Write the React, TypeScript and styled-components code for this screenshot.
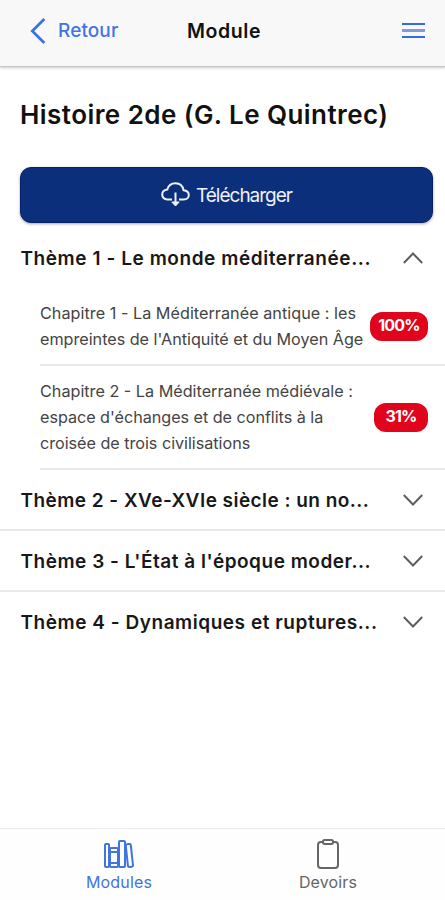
import React from "react";
import styled, { createGlobalStyle } from "styled-components";
import { IoLibraryOutline, IoClipboardOutline } from "react-icons/io5";

const GlobalStyle = createGlobalStyle`
  *, *::before, *::after { box-sizing: border-box; }
  body {
    margin: 0;
    background: #fff;
    font-family: Inter, "Liberation Sans", sans-serif;
    color: #111;
  }
  button {
    font: inherit;
    border: 0;
    padding: 0;
    background: none;
  }
  svg { display: block; flex: none; }
`;

const Screen = styled.div`
  display: flex;
  flex-direction: column;
  height: 900px;
  overflow: hidden;
`;

const Header = styled.header`
  display: grid;
  grid-template-columns: 157px 1fr auto;
  align-items: center;
  flex: none;
  height: 66px;
  padding: 0 20px 5px 30px;
  background: #f9f8f9;
  box-shadow: 0 1px 1px #c6c6c6, 0 2px 3px #cfcfcf;
`;

const BackButton = styled.button`
  display: flex;
  align-items: center;
  gap: 11px;
  color: #4274e4;
  font-size: 19px;
  font-weight: 500;
  letter-spacing: 0.1px;
`;

const HeaderTitle = styled.h1`
  margin: 0;
  font-size: 19.5px;
  line-height: 24px;
  font-weight: 600;
  letter-spacing: 0.6px;
`;

const MenuButton = styled.button`
  justify-self: end;
`;

const Content = styled.main`
  flex: 1;
`;

const CourseTitle = styled.h2`
  margin: 33px 0 0 20px;
  font-size: 26px;
  line-height: 32px;
  font-weight: 600;
  letter-spacing: 0.44px;
  white-space: nowrap;
`;

const DownloadButton = styled.button`
  display: flex;
  align-items: center;
  justify-content: center;
  gap: 6px;
  width: 413px;
  height: 56px;
  margin: 36px 0 0 20px;
  border-radius: 11px;
  border: 1px solid #0a1f6a;
  background: #0c2f7b;
  box-shadow: 0 1px 3px rgba(0, 0, 0, 0.35);
  color: #eef1fa;
  font-size: 19px;
  letter-spacing: -1px;
`;

const ThemeRow = styled.button<{ $open?: boolean; $last?: boolean }>`
  display: flex;
  align-items: center;
  justify-content: space-between;
  width: 100%;
  height: ${({ $open, $last }) => ($open ? 70 : $last ? 59 : 61)}px;
  padding: ${({ $open }) => ($open ? "0" : "1px")} 21px 0 20.5px;
  border-bottom: ${({ $open, $last }) => ($open || $last ? "0" : "2px solid #e9e9e9")};
  color: #181818;
  text-align: left;
`;

const ThemeTitle = styled.span<{ $spacing: number }>`
  font-size: 19px;
  line-height: 26px;
  padding-top: 1px;
  font-weight: 600;
  letter-spacing: ${({ $spacing }) => $spacing}px;
  white-space: nowrap;
`;

const ChapterList = styled.ul`
  list-style: none;
  margin: 0;
  padding: 0 0 0 40px;
`;

const Chapter = styled.li<{ $height: number; $lift: number }>`
  display: flex;
  align-items: center;
  justify-content: space-between;
  height: ${({ $height }) => $height}px;
  padding-right: 17px;
  padding-bottom: ${({ $lift }) => $lift}px;
  border-bottom: 2px solid #e9e9e9;
`;

const ChapterTitle = styled.span`
  flex: none;
  width: 328px;
  color: #444;
  font-size: 16.2px;
  line-height: 26px;
`;

const Line = styled.span<{ $spacing: number }>`
  display: block;
  white-space: nowrap;
  letter-spacing: ${({ $spacing }) => $spacing}px;
`;

const Score = styled.span<{ $wide?: boolean }>`
  flex: none;
  width: ${({ $wide }) => ($wide ? 58 : 54)}px;
  height: 29px;
  margin-left: -10px;
  border-radius: 12px;
  background: #e0041c;
  color: #fff;
  font-size: 16px;
  line-height: 27px;
  font-weight: 700;
  letter-spacing: -0.75px;
  text-align: center;
`;

const TabBar = styled.nav`
  display: grid;
  grid-template-columns: 209px 209px;
  justify-content: center;
  flex: none;
  height: 72px;
  padding-left: 2px;
  border-top: 1px solid #ececec;
  background: #fefefe;
`;

const Tab = styled.button<{ $active?: boolean }>`
  display: flex;
  flex-direction: column;
  align-items: center;
  justify-content: flex-start;
  gap: 1px;
  padding-top: 9px;
  color: ${({ $active }) => ($active ? "#4273df" : "#666")};
  font-size: 16px;
  line-height: 22px;
  letter-spacing: 0.15px;
`;

const Chevron = ({ up = false }: { up?: boolean }) => (
  <svg width="22" height="14" viewBox="0 0 22 14" fill="none" stroke="#5e5e5e" strokeWidth="2">
    <path d={up ? "M1.8 12 L11 2.5 L20.2 12" : "M1.8 2 L11 11.5 L20.2 2"} />
  </svg>
);

const BackIcon = () => (
  <svg width="17" height="28" viewBox="0 0 17 28" fill="none" stroke="#3a70e8" strokeWidth="2.7">
    <path d="M14.3 2 L2.3 14 L14.3 26" />
  </svg>
);

const MenuIcon = () => (
  <svg width="23" height="17" viewBox="0 0 23 17">
    <rect y="1" width="23" height="2" fill="#356be0" />
    <rect y="7" width="23" height="3" fill="#8299dc" />
    <rect y="14" width="23" height="2" fill="#356be0" />
  </svg>
);

const CloudDownloadIcon = () => (
  <svg width="29" height="26" viewBox="0 0 29 26" fill="none" stroke="currentColor" strokeWidth="2">
    <path d="M11 17.5 H6.2 C3.2 17.5 1.2 15.3 1.2 12.6 C1.2 9.8 3.3 8 6.3 7.6 C7.3 3.8 10.5 1.3 14.5 1.3 C18.8 1.3 21.8 4.2 22.5 8.2 C25.7 8.5 27.8 10.3 27.8 13 C27.8 15.7 25.7 17.5 22.8 17.5 H18" />
    <path d="M14.5 10.5 V22" />
    <path d="M10.8 20 L14.5 24 L18.2 20 Z" fill="currentColor" strokeWidth="1" strokeLinejoin="round" />
  </svg>
);

type ChapterData = {
  height: number;
  lift: number;
  score: string;
  lines: [string, number][];
};

const chapters: ChapterData[] = [
  {
    height: 73,
    lift: 5,
    score: "100%",
    lines: [
      ["Chapitre 1 - La Méditerranée antique : les", 0.03],
      ["empreintes de l'Antiquité et du Moyen Âge", -0.02],
    ],
  },
  {
    height: 104,
    lift: 0,
    score: "31%",
    lines: [
      ["Chapitre 2 - La Méditerranée médiévale :", 0],
      ["espace d'échanges et de conflits à la", -0.04],
      ["croisée de trois civilisations", -0.03],
    ],
  },
];

const closedThemes: [string, number][] = [
  ["Thème 2 - XVe-XVIe siècle : un no...", 0.46],
  ["Thème 3 - L'État à l'époque moder...", 0.52],
  ["Thème 4 - Dynamiques et ruptures...", 0.54],
];

export default function App() {
  return (
    <Screen>
      <GlobalStyle />
      <Header>
        <BackButton>
          <BackIcon />
          Retour
        </BackButton>
        <HeaderTitle>Module</HeaderTitle>
        <MenuButton aria-label="Menu">
          <MenuIcon />
        </MenuButton>
      </Header>
      <Content>
        <CourseTitle>Histoire 2de (G. Le Quintrec)</CourseTitle>
        <DownloadButton>
          <CloudDownloadIcon />
          Télécharger
        </DownloadButton>
        <ThemeRow $open>
          <ThemeTitle $spacing={0.57}>Thème 1 - Le monde méditerranée...</ThemeTitle>
          <Chevron up />
        </ThemeRow>
        <ChapterList>
          {chapters.map((chapter) => (
            <Chapter key={chapter.score} $height={chapter.height} $lift={chapter.lift}>
              <ChapterTitle>
                {chapter.lines.map(([text, spacing]) => (
                  <Line key={text} $spacing={spacing}>{text}</Line>
                ))}
              </ChapterTitle>
              <Score $wide={chapter.score.length > 3}>{chapter.score}</Score>
            </Chapter>
          ))}
        </ChapterList>
        {closedThemes.map(([title, spacing], index) => (
          <ThemeRow key={title} $last={index === closedThemes.length - 1}>
            <ThemeTitle $spacing={spacing}>{title}</ThemeTitle>
            <Chevron />
          </ThemeRow>
        ))}
      </Content>
      <TabBar>
        <Tab $active>
          <IoLibraryOutline size={32} />
          Modules
        </Tab>
        <Tab>
          <IoClipboardOutline size={32} />
          Devoirs
        </Tab>
      </TabBar>
    </Screen>
  );
}
